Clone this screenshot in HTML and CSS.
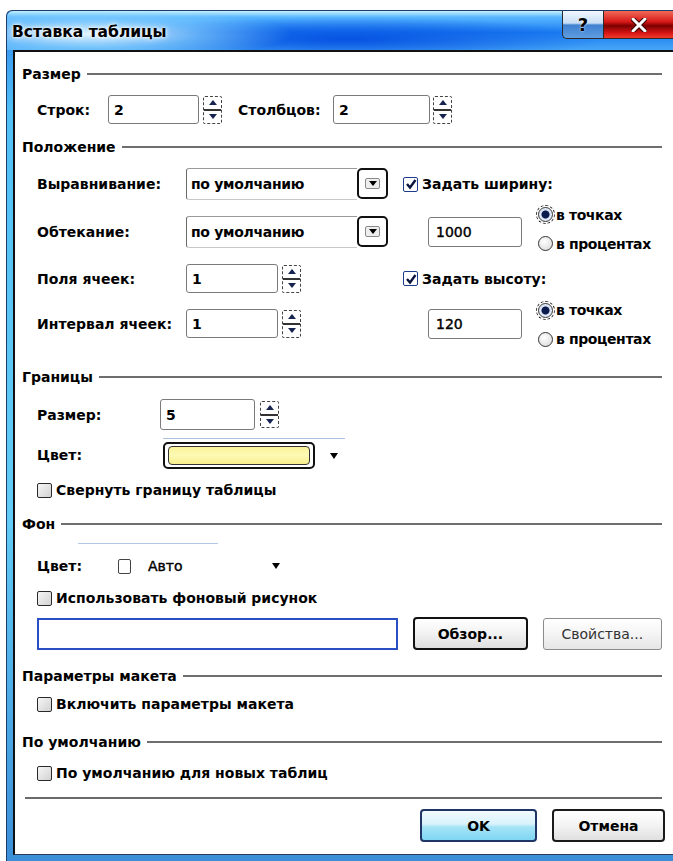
FILE: index.html
```html
<!DOCTYPE html>
<html lang="ru">
<head>
<meta charset="utf-8">
<title>Вставка таблицы</title>
<link rel="stylesheet" href="styles.css">
</head>
<body>
<div class="window">
  <div class="titlebar">
    <span class="title">Вставка таблицы</span>
    <div class="caption">
      <span class="cap-btn help">?</span>
      <span class="cap-btn close">
        <svg width="16" height="14" viewBox="0 0 16 14"><path d="M2 1 L14 13 M14 1 L2 13" stroke="#3a0000" stroke-width="5" stroke-linecap="round"/><path d="M2 1 L14 13 M14 1 L2 13" stroke="#fff" stroke-width="3" stroke-linecap="round"/></svg>
      </span>
    </div>
  </div>

  <div class="client">
    <!-- Размер -->
    <div class="group-head">Размер</div>
    <div class="row size-row">
      <span class="lbl w71">Строк:</span>
      <span class="field f-rows">2</span>
      <span class="spin"><i class="up"></i><i class="down"></i></span>
      <span class="lbl w95 ml16">Столбцов:</span>
      <span class="field f-cols">2</span>
      <span class="spin ml3"><i class="up"></i><i class="down"></i></span>
    </div>

    <!-- Положение -->
    <div class="group-head mt15">Положение</div>
    <div class="pos-grid">
      <span class="lbl">Выравнивание:</span>
      <div class="select"><span class="field sel-field">по умолчанию</span><span class="drop"><i></i></span></div>
      <label class="check on"><i><svg width="12" height="12" viewBox="0 0 12 12"><path d="M2 6 L5 9.5 L10.5 2" fill="none" stroke="#0b1640" stroke-width="2.4"/></svg></i>Задать ширину:</label>

      <span class="lbl">Обтекание:</span>
      <div class="select"><span class="field sel-field">по умолчанию</span><span class="drop"><i></i></span></div>
      <div class="dim">
        <span class="field f-dim">1000</span>
        <div class="radios upper">
          <span class="radio on"><i></i>в точках</span>
          <span class="radio"><i></i>в процентах</span>
        </div>
      </div>

      <span class="lbl">Поля ячеек:</span>
      <div class="spinfield"><span class="field f-cell">1</span><span class="spin"><i class="up"></i><i class="down"></i></span></div>
      <label class="check on"><i><svg width="12" height="12" viewBox="0 0 12 12"><path d="M2 6 L5 9.5 L10.5 2" fill="none" stroke="#0b1640" stroke-width="2.4"/></svg></i>Задать высоту:</label>

      <span class="lbl">Интервал ячеек:</span>
      <div class="spinfield"><span class="field f-cell">1</span><span class="spin"><i class="up"></i><i class="down"></i></span></div>
      <div class="dim">
        <span class="field f-dim">120</span>
        <div class="radios lower">
          <span class="radio on"><i></i>в точках</span>
          <span class="radio"><i></i>в процентах</span>
        </div>
      </div>
    </div>

    <!-- Границы -->
    <div class="group-head mt31">Границы</div>
    <div class="row border-size">
      <span class="lbl w123">Размер:</span>
      <span class="field f-bsize">5</span>
      <span class="spin ml5 short"><i class="up"></i><i class="down"></i></span>
    </div>
    <div class="row color-row">
      <span class="lbl w126">Цвет:</span>
      <div class="picker">
        <span class="swatch"><span class="swatch-fill"></span></span>
        <span class="arrow ml15"></span>
      </div>
    </div>
    <label class="check row-check mt10"><i></i>Свернуть границу таблицы</label>

    <!-- Фон -->
    <div class="group-head mt18">Фон</div>
    <div class="bg-line"></div>
    <div class="row bg-color">
      <span class="lbl w81">Цвет:</span>
      <span class="auto-box"></span>
      <span class="auto-text">Авто</span>
      <span class="arrow"></span>
    </div>
    <label class="check row-check mt9"><i></i>Использовать фоновый рисунок</label>
    <div class="row path-row">
      <span class="path-field"></span>
      <span class="btn browse">Обзор...</span>
      <span class="btn props">Свойства...</span>
    </div>

    <!-- Параметры макета -->
    <div class="group-head mt18">Параметры макета</div>
    <label class="check row-check mt12"><i></i>Включить параметры макета</label>

    <!-- По умолчанию -->
    <div class="group-head mt22">По умолчанию</div>
    <label class="check row-check mt15"><i></i>По умолчанию для новых таблиц</label>

    <div class="separator"></div>
    <div class="actions">
      <span class="btn ok">OK</span>
      <span class="btn cancel">Отмена</span>
    </div>
  </div>
</div>
</body>
</html>
```

FILE: styles.css
```css
* { box-sizing: border-box; }

html, body {
  margin: 0;
  height: 100%;
}

body {
  background: #fff;
  overflow: hidden;
  font-family: "DejaVu Sans", "Liberation Sans", sans-serif;
  font-size: 14px;
  font-weight: bold;
  color: #000;
}

/* window frame */
.window {
  margin: 10px 0 0 6px;
  width: 680px;
  height: 851px;
  border-top: 1px solid #1c3c6e;
  border-left: 1px solid #1c3c6e;
  border-radius: 6px 0 0 0;
  background: linear-gradient(to bottom, #2d86ee 0, #52c0f6 12%, #62cbf6 60%, #3a8fd8 100%);
  display: flex;
  flex-direction: column;
}

.titlebar {
  height: 39px;
  display: flex;
  justify-content: space-between;
  align-items: stretch;
  padding-left: 5px;
  border-radius: 6px 0 0 0;
  background:
    radial-gradient(ellipse 200px 26px at 85px 23px, rgba(235,250,255,0.95), rgba(150,220,255,0.55) 55%, rgba(150,220,255,0) 100%),
    radial-gradient(ellipse 260px 22px at 340px 28px, #0652e2, rgba(6,82,226,0) 100%),
    linear-gradient(to bottom, #c6f1ff 0, #58b6ff 16%, #1c7ef2 55%, #46a6f7 100%);
}

.title {
  align-self: center;
  margin-top: 2px;
  font-size: 15.5px;
  text-shadow: 0 0 6px #fff, 0 0 3px #fff;
}

.caption {
  display: flex;
  align-items: flex-start;
  margin-right: 11px;
}

.cap-btn {
  height: 28px;
  display: flex;
  align-items: center;
  justify-content: center;
  border: 1px solid #2a2a2a;
  border-top: none;
}

.help {
  width: 41px;
  border-radius: 0 0 0 5px;
  border-right: none;
  background: linear-gradient(to bottom, #f2f8ff 0, #c7def5 45%, #3f7fd0 52%, #5f9ee0 100%);
  font-size: 18px;
  color: #000;
  text-shadow: 0 0 2px #fff;
}

.close {
  width: 72px;
  background: linear-gradient(to bottom, #f06a58 0, #d81818 40%, #7a0000 55%, #d41414 80%, #f03a2a 100%);
}

/* client area */
.client {
  flex: 1;
  margin: 0 0 6px 6px;
  border-top: 2px solid #111;
  border-left: 2px solid #111;
  border-bottom: 1px solid #2a3b55;
  background: #fff;
  padding: 14px 24px 0 7px;
}

.group-head {
  display: flex;
  align-items: center;
  gap: 6px;
  height: 16px;
  line-height: 16px;
}

.group-head::after {
  content: "";
  flex: 1;
  border-top: 2px solid #6e6e6e;
}

.row {
  display: flex;
  align-items: center;
  padding-left: 15px;
}

.lbl { white-space: nowrap; }
.w71 { width: 71px; }
.w81 { width: 81px; }
.w95 { width: 95px; }
.w123 { width: 123px; }
.w126 { width: 126px; }

.ml3 { margin-left: 3px; }
.ml5 { margin-left: 5px; }
.ml15 { margin-left: 15px; }
.ml16 { margin-left: 16px; }
.mt9 { margin-top: 9px; }
.mt10 { margin-top: 10px; }
.mt12 { margin-top: 12px; }
.mt15 { margin-top: 15px; }
.mt18 { margin-top: 18px; }
.mt22 { margin-top: 22px; }
.mt31 { margin-top: 31px; }

.size-row { margin-top: 13px; height: 29px; }

/* text fields */
.field {
  display: flex;
  align-items: center;
  height: 29px;
  padding-left: 5px;
  border: 1px solid #7a7a7a;
  border-radius: 3px;
  background: #fff;
}

.f-rows { width: 91px; }
.f-cols { width: 97px; }
.f-cell { width: 92px; }
.f-dim { width: 94px; height: 30px; padding-left: 7px; font-weight: normal; -webkit-text-stroke: 0.4px #000; }
.f-bsize { width: 95px; height: 31px; }

/* spinner buttons */
.spin {
  width: 19px;
  height: 28px;
  margin-left: 4px;
  border: 1px dashed #444;
  border-radius: 2px;
  display: flex;
  flex-direction: column;
}
.spin.ml3 { margin-left: 3px; }
.spin.ml5 { margin-left: 5px; }
.spin.short { height: 27px; }

.spin i {
  flex: 1;
  display: flex;
  align-items: center;
  justify-content: center;
}
.spin i.up { border-bottom: 2px solid #333; }
.spin i.up::before {
  content: "";
  border-left: 4px solid transparent;
  border-right: 4px solid transparent;
  border-bottom: 5px solid #16244f;
}
.spin i.down::before {
  content: "";
  border-left: 4px solid transparent;
  border-right: 4px solid transparent;
  border-top: 5px solid #16244f;
}

/* position grid */
.pos-grid {
  margin-top: 13px;
  padding-left: 15px;
  display: grid;
  grid-template-columns: 134px 202px auto;
  grid-template-rows: 32px 32px 29px 29px;
  row-gap: 16px;
  column-gap: 15px;
  align-items: center;
}

.select {
  display: flex;
  height: 32px;
}
.sel-field {
  flex: 1;
  height: 32px;
  padding-left: 4px;
  border-right: none;
  border-radius: 3px 0 0 3px;
  border-color: #9a9a9a #c8c8c8 #c8c8c8 #6a6a6a;
  letter-spacing: -0.3px;
}
.drop {
  width: 31px;
  height: 31px;
  border: 2px solid #111;
  border-radius: 5px;
  display: flex;
  align-items: center;
  justify-content: center;
  background: #fff;
}
.drop i {
  width: 15px;
  height: 11px;
  border: 1px solid #8a8a8a;
  border-radius: 2px;
  background: #eee;
  display: flex;
  align-items: center;
  justify-content: center;
}
.drop i::before {
  content: "";
  border-left: 4px solid transparent;
  border-right: 4px solid transparent;
  border-top: 5px solid #000;
}

.spinfield { display: flex; align-items: center; }

.dim {
  display: flex;
  align-items: center;
  padding-left: 25px;
}

.radios {
  display: flex;
  flex-direction: column;
  gap: 13px;
  margin-left: 16px;
}
.radios.upper { margin-top: -6px; }
.radios.lower { margin-top: 2px; }

.radio {
  display: flex;
  align-items: center;
  gap: 3px;
  height: 16px;
  letter-spacing: -0.4px;
  white-space: nowrap;
}
.radio i {
  flex: none;
  width: 15px;
  height: 15px;
  border-radius: 50%;
  border: 1.5px solid #333;
  background: radial-gradient(circle at 40% 35%, #fff 0, #e2e2e2 70%);
}
.radio.on i {
  background: radial-gradient(circle, #0b1a4d 0 3.5px, #d8e2f5 4.5px, #fff 100%);
  outline: 1px dashed #222;
  outline-offset: 1px;
}

/* checkboxes */
.check {
  display: flex;
  align-items: center;
  gap: 4px;
  height: 16px;
  white-space: nowrap;
}
.check i {
  flex: none;
  width: 15px;
  height: 15px;
  border: 1.5px solid #2a2a2a;
  border-radius: 2px;
  background: linear-gradient(135deg, #f6f6f6 0, #d2d2d2 100%);
  display: flex;
  align-items: center;
  justify-content: center;
}
.check.on i {
  border-color: #1e3c8c;
  background: #fff;
}
.row-check { margin-left: 15px; }

/* borders section */
.border-size { margin-top: 14px; height: 31px; }

.color-row { margin-top: 8px; height: 34px; align-items: stretch; }
.color-row .lbl { align-self: center; }
.picker {
  width: 182px;
  border-top: 1px solid #adc2e2;
  display: flex;
  align-items: center;
}
.swatch {
  width: 152px;
  height: 27px;
  border: 2px solid #111;
  border-radius: 5px;
  padding: 2px 3px;
  background: #fff;
  display: flex;
}
.swatch-fill {
  flex: 1;
  border: 1px solid #333;
  border-radius: 4px;
  background: linear-gradient(to bottom, #fbf39a 0, #fdf9b4 50%, #f8ef8c 100%);
}
.arrow {
  width: 0;
  height: 0;
  border-left: 4px solid transparent;
  border-right: 4px solid transparent;
  border-top: 6px solid #000;
}

/* background section */
.bg-line {
  margin: 11px 0 0 56px;
  width: 140px;
  border-top: 1px solid #b5c7e4;
}
.bg-color { margin-top: 7px; height: 30px; }
.auto-box {
  width: 13px;
  height: 15px;
  border: 1px solid #444;
  border-radius: 2px;
}
.auto-text {
  width: 124px;
  margin-left: 17px;
  font-weight: normal;
  -webkit-text-stroke: 0.4px #000;
}

.path-row { margin-top: 11px; height: 33px; }
.path-field {
  width: 363px;
  height: 32px;
  border: 2px solid #2a4fc4;
}

.btn {
  height: 33px;
  display: flex;
  align-items: center;
  justify-content: center;
  white-space: nowrap;
}
.browse {
  width: 115px;
  margin-left: 15px;
  border: 2px solid #111;
  border-radius: 4px;
  background: linear-gradient(to bottom, #fff 0, #f2f2f2 50%, #dedede 100%);
}
.props {
  width: 120px;
  height: 32px;
  margin-left: 15px;
  border: 1px solid #8c8c8c;
  border-radius: 3px;
  background: linear-gradient(to bottom, #fff 0, #f4f4f4 50%, #e6e6e6 100%);
  font-weight: normal;
  color: #333;
}

.separator {
  margin: 16px 0 0 3px;
  border-top: 2px solid #6a6a6a;
}

.actions {
  display: flex;
  justify-content: flex-end;
  gap: 15px;
  margin: 10px -3px 0 0;
}
.ok {
  width: 117px;
  border: 2px solid #1f3566;
  border-radius: 4px;
  background: linear-gradient(to bottom, #f2fbff 0, #d8f2fc 45%, #a6e4f7 55%, #7fd6f2 100%);
}
.cancel {
  width: 113px;
  border: 2px solid #1a1a1a;
  border-radius: 4px;
  background: linear-gradient(to bottom, #fff 0, #f3f3f3 50%, #e0e0e0 100%);
}
```
